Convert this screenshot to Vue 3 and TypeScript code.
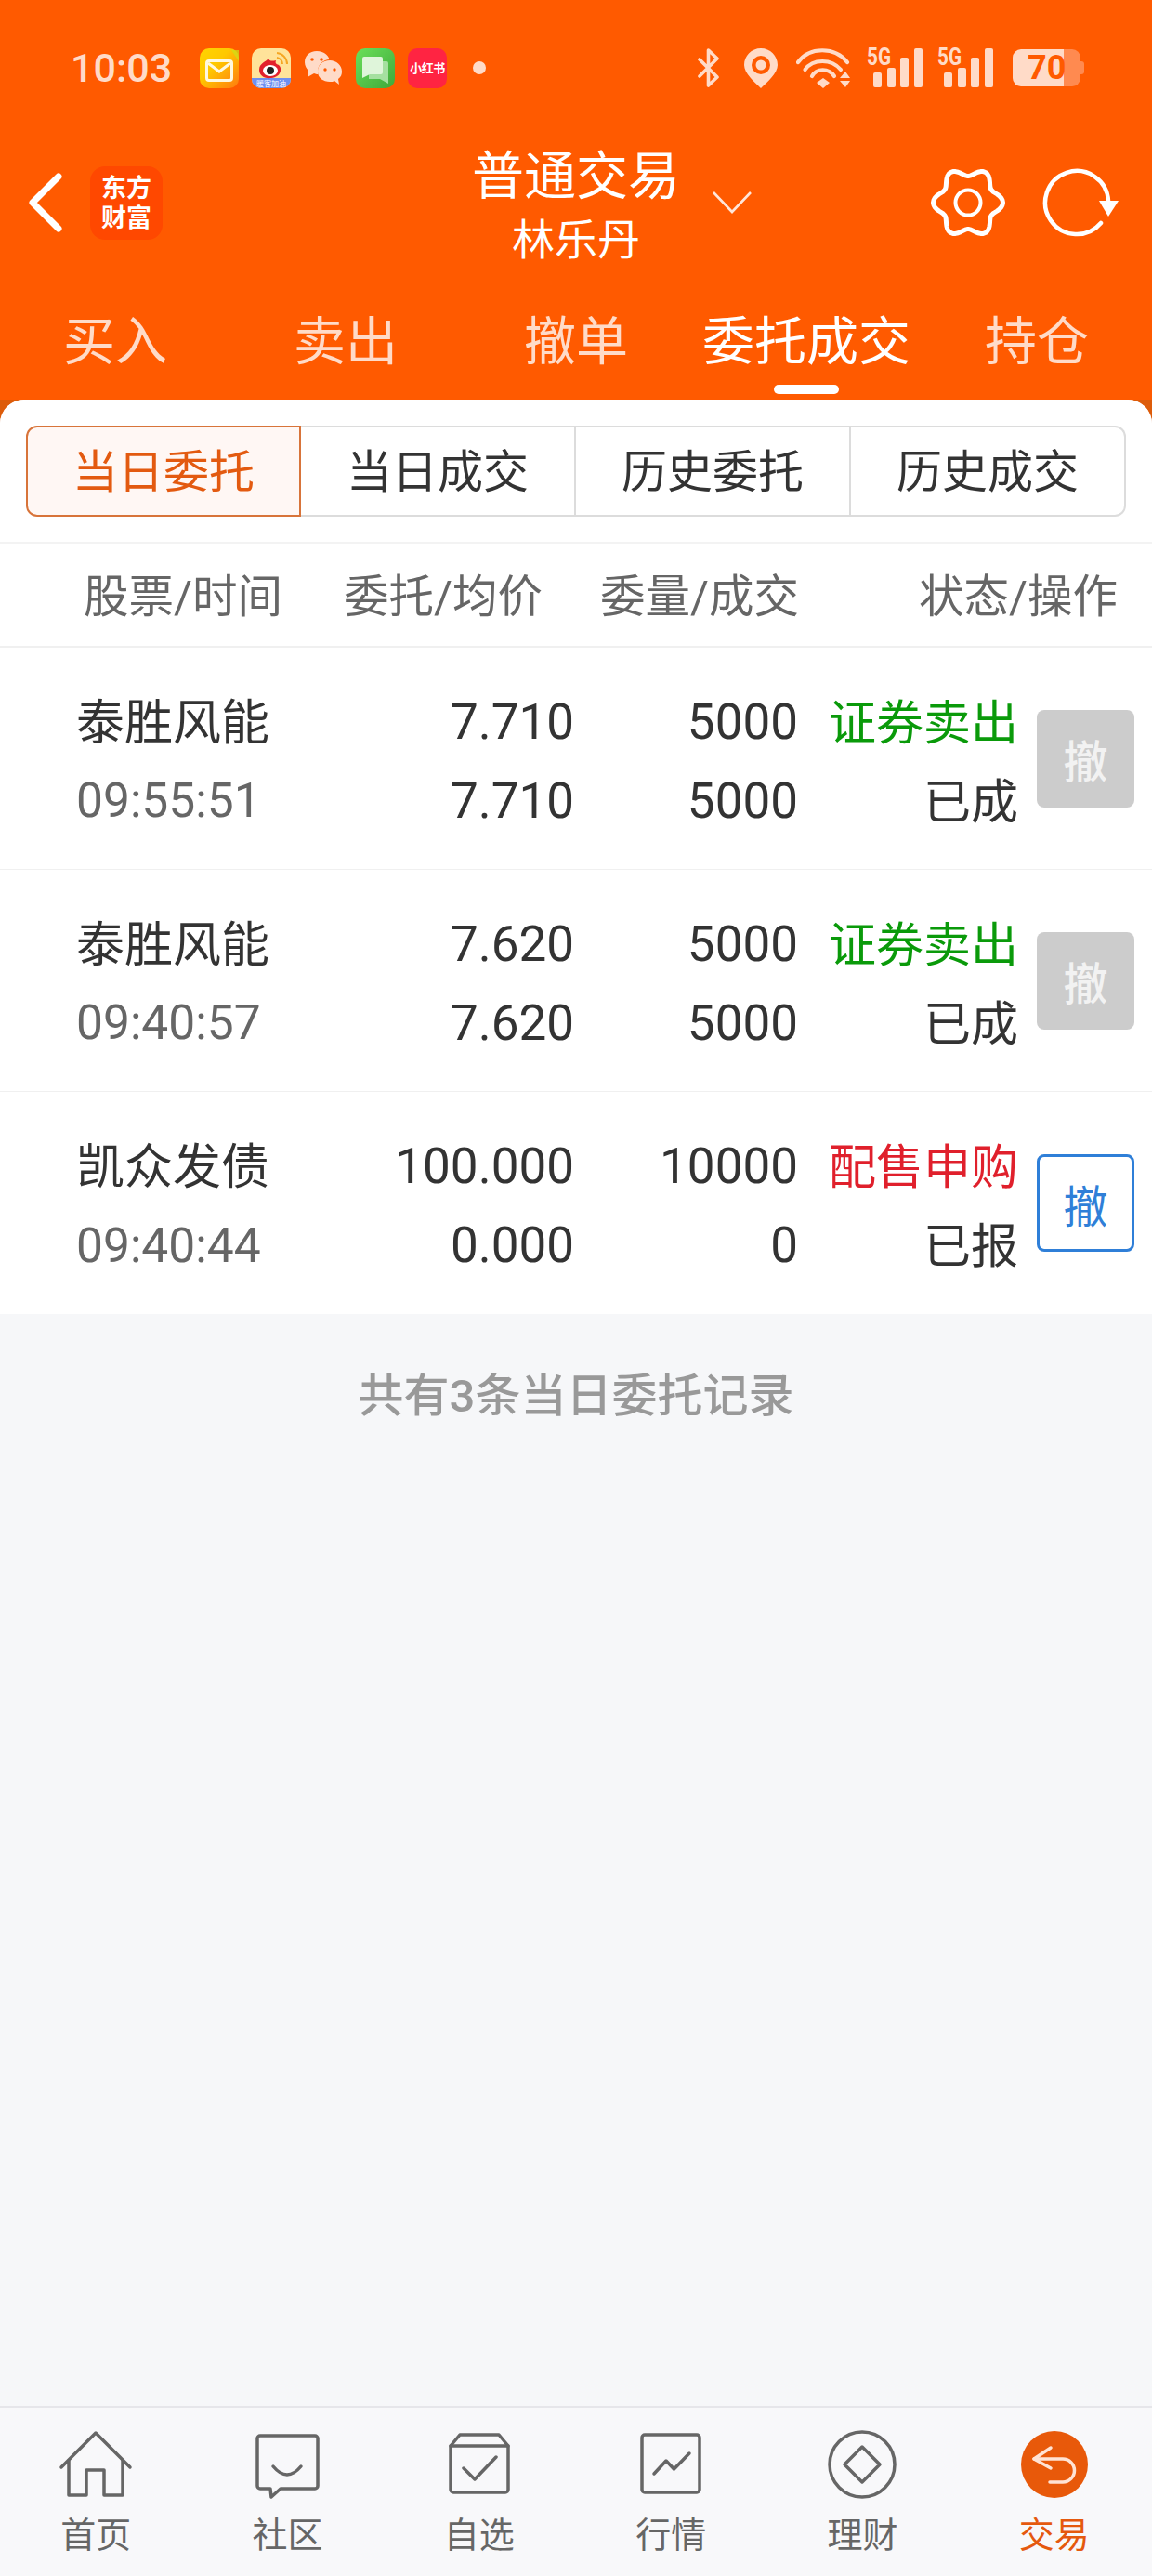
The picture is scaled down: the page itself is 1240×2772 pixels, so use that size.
<template>
  <div class="page">
    <header class="top">
      <div class="status">
        <span class="time">10:03</span>
        <div class="notes">
          <svg class="app" viewBox="0 0 42 43">
            <defs>
              <linearGradient id="mailBg" x1="0" y1="0" x2="1" y2="1">
                <stop offset="0" stop-color="#ffd400" />
                <stop offset="0.4" stop-color="#ffc800" />
                <stop offset="1" stop-color="#ff7a10" />
              </linearGradient>
            </defs>
            <rect width="42" height="43" rx="10" fill="url(#mailBg)" />
            <path d="M34 2 L42 2 L42 14 Z" fill="#cfe01a" opacity="0.7" />
            <rect x="7.5" y="13.5" width="27" height="21" rx="2.5" fill="none" stroke="#fff8e0" stroke-width="3" />
            <path d="M9 16 L21 25 L33 16" fill="none" stroke="#fff8e0" stroke-width="3" />
          </svg>
          <svg class="app" viewBox="0 0 42 43">
            <rect width="42" height="43" rx="10" fill="#ffe39a" />
            <path d="M0 32 H42 V33 A10 10 0 0 1 32 43 H10 A10 10 0 0 1 0 33 Z" fill="#6f8ff0" />
            <path d="M27 5 A12 12 0 0 1 38 17 M27 10 A7 7 0 0 1 33 17" fill="none" stroke="#f5a623" stroke-width="2" />
            <path d="M8 23 C8 16 16 14 18 11 C19 14 22 14 26 13 C25 16 26 17 29 18 C33 21 32 31 21 32 C13 33 8 29 8 23 Z" fill="#e2202c" />
            <ellipse cx="20" cy="24" rx="8" ry="6" fill="#fff" />
            <circle cx="20" cy="24" r="4" fill="#222" />
            <text x="21" y="41" class="app-tiny" text-anchor="middle">暖客加油</text>
          </svg>
          <svg class="chat" viewBox="0 0 42 38">
            <path d="M14 1 C6 1 1 6 1 13 C1 17 3 20 5 22 L4 29 L11 25 C13 26 15 26 17 26 C24 26 28 20 28 13 C28 6 22 1 14 1 Z" fill="#ffdbc8" />
            <circle cx="9" cy="10" r="1.8" fill="#ff5a00" />
            <circle cx="19" cy="10" r="1.8" fill="#ff5a00" />
            <circle cx="28" cy="23" r="13" fill="#ff5a00" />
            <path d="M28 11 C20 11 15 16 15 23 C15 30 21 34 28 34 C30 34 32 34 33 33 L38 37 L37 31 C40 29 41 26 41 23 C41 16 35 11 28 11 Z" fill="#ffdbc8" />
            <circle cx="23" cy="21" r="1.7" fill="#ff5a00" />
            <circle cx="33" cy="21" r="1.7" fill="#ff5a00" />
          </svg>
          <svg class="app" viewBox="0 0 42 43">
            <defs>
              <linearGradient id="msgBg" x1="0" y1="0" x2="1" y2="1">
                <stop offset="0" stop-color="#6ae05a" />
                <stop offset="1" stop-color="#3fa83a" />
              </linearGradient>
            </defs>
            <rect width="42" height="43" rx="10" fill="url(#msgBg)" />
            <path d="M14 14 H33 A2 2 0 0 1 35 16 V38 L26 33 H14 Z" fill="#a5e0a0" />
            <path d="M9 9 H27 A2 2 0 0 1 29 11 V26 A2 2 0 0 1 27 28 H15 L7 32 V11 A2 2 0 0 1 9 9 Z" fill="#dff5da" />
          </svg>
          <div class="xhs">小红书</div>
          <i class="dot" />
        </div>
        <div class="sys">
          <svg class="bt" viewBox="0 0 25 42">
            <path d="M3 12 L22 31 L12.5 40 V2 L22 11 L3 30" fill="none" stroke="#ffdbc8" stroke-width="3.6" stroke-linejoin="round" stroke-linecap="round" />
          </svg>
          <svg class="pin" viewBox="0 0 36 43">
            <path d="M18 0 C8 0 0 8 0 18 C0 27 11 36 18 43 C25 36 36 27 36 18 C36 8 28 0 18 0 Z" fill="#ffdbc8" />
            <circle cx="18" cy="18" r="10" fill="#ff5a00" />
            <circle cx="18" cy="18" r="5.5" fill="#ffdbc8" />
          </svg>
          <svg class="wifi" viewBox="0 0 60 43">
            <g fill="none" stroke="#ffdbc8" stroke-width="4.2" stroke-linecap="round">
              <path d="M2 15 C14 -2 42 -2 55 15" />
              <path d="M9.500 23 C18 11 38 11 48 23" />
              <path d="M17 30 C22 21 35 21 41 30" />
            </g>
            <path d="M29 32 L36 37 L29 43 L22 37 Z" fill="#ffdbc8" />
            <path d="M53 25 L58 32 H47 Z M47 35 H58 L53 42 Z" fill="#ffdbc8" />
          </svg>
          <svg v-for="n in 2" :key="n" class="signal" viewBox="0 -8 60 52">
            <text x="0" y="19" class="five-g" textLength="26" lengthAdjust="spacingAndGlyphs">5G</text>
            <rect v-for="b in bars" :key="b.x" :x="b.x" :y="b.y" width="9" :height="43 - b.y" rx="2" fill="#ffdbc8" />
          </svg>
          <div class="battery">
            <span class="battery-num">70</span>
          </div>
        </div>
      </div>

      <div class="titlebar">
        <div class="tb-left">
          <svg class="back" viewBox="0 0 40 66">
            <path d="M35 5 L7 33 L35 61" fill="none" stroke="#fff" stroke-width="7" stroke-linecap="round" stroke-linejoin="round" />
          </svg>
          <div class="logo">东方<br />财富</div>
        </div>
        <div class="tb-mid">
          <div class="title">普通交易</div>
          <div class="sub">林乐丹</div>
        </div>
        <div class="tb-right">
          <svg class="caret" viewBox="0 0 42 24">
            <path d="M1 1 L21 22 L41 1" fill="none" stroke="#ffe6da" stroke-width="2.600" />
          </svg>
          <svg class="gear" viewBox="0 0 84 84">
            <path :d="gearPath" fill="none" stroke="#fff" stroke-width="5" stroke-linejoin="round" />
            <circle cx="42" cy="42" r="13.500" fill="none" stroke="#fff" stroke-width="4" />
          </svg>
          <svg class="refresh" viewBox="0 0 88 80">
            <path d="M65 62 A34 34 0 1 1 73 38" fill="none" stroke="#fff" stroke-width="4.500" stroke-linecap="round" />
            <path d="M63 38 H84 L73 55 Z" fill="#fff" />
          </svg>
        </div>
      </div>

      <nav class="tabs">
        <div v-for="(t, i) in tabs" :key="t" class="tab" :class="{ on: i === 3 }">
          {{ t }}
          <i v-if="i === 3" class="tab-bar" />
        </div>
      </nav>
    </header>

    <main class="main">
      <div class="panel">
        <div class="white">
          <div class="seg">
            <div v-for="(s, i) in segs" :key="s" class="seg-item" :class="{ on: i === 0 }">{{ s }}</div>
          </div>
          <div class="head">
            <span>股票/时间</span>
            <span class="r">委托/均价</span>
            <span class="r">委量/成交</span>
            <span class="r">状态/操作</span>
          </div>
          <div v-for="o in orders" :key="o.time" class="row">
            <span class="name">{{ o.name }}</span>
            <span class="r">{{ o.price }}</span>
            <span class="r">{{ o.qty }}</span>
            <span class="r cjk" :class="o.dir">{{ o.kind }}</span>
            <button class="cancel" :class="{ live: o.live }">撤</button>
            <span class="clock">{{ o.time }}</span>
            <span class="r">{{ o.avg }}</span>
            <span class="r">{{ o.done }}</span>
            <span class="r cjk">{{ o.state }}</span>
          </div>
        </div>
        <div class="summary">共有3条当日委托记录</div>
      </div>
    </main>

    <footer class="nav">
      <div v-for="(n, i) in navs" :key="n.label" class="nav-item" :class="{ on: i === 5 }">
        <svg class="nav-icon" viewBox="0 0 80 80">
          <circle v-if="i === 4" cx="40" cy="40" r="35" />
          <circle v-if="i === 5" cx="40" cy="40" r="36" class="disc" />
          <path v-for="d in n.paths" :key="d" :d="d" />
        </svg>
        <span>{{ n.label }}</span>
      </div>
    </footer>
  </div>
</template>

<script setup lang="ts">
const tabs = ['买入', '卖出', '撤单', '委托成交', '持仓']
const segs = ['当日委托', '当日成交', '历史委托', '历史成交']

const bars = [
  { x: 7, y: 27 },
  { x: 22, y: 22 },
  { x: 36, y: 11 },
  { x: 51, y: 1 },
]

const orders = [
  { name: '泰胜风能', time: '09:55:51', price: '7.710', avg: '7.710', qty: '5000', done: '5000', kind: '证券卖出', state: '已成', dir: 'sell', live: false },
  { name: '泰胜风能', time: '09:40:57', price: '7.620', avg: '7.620', qty: '5000', done: '5000', kind: '证券卖出', state: '已成', dir: 'sell', live: false },
  { name: '凯众发债', time: '09:40:44', price: '100.000', avg: '0.000', qty: '10000', done: '0', kind: '配售申购', state: '已报', dir: 'buy', live: true },
]

const navs = [
  { label: '首页', paths: ['M3 43 L40 6 L77 43', 'M11 36 V73 H30 V46 H49 V73 H69 V36'] },
  { label: '社区', paths: ['M11 9 H70 a3 3 0 0 1 3 3 V63 a3 3 0 0 1 -3 3 H33 L23 75 L22 66 H11 a3 3 0 0 1 -3 -3 V12 a3 3 0 0 1 3 -3 Z', 'M25 42 Q40 60 55 42'] },
  { label: '自选', paths: ['M9 20 L19 8 H61 L71 20 V67 a3 3 0 0 1 -3 3 H12 a3 3 0 0 1 -3 -3 Z', 'M9 20 H71', 'M23 44 L35 56 L58 32'] },
  { label: '行情', paths: ['M12 8 H68 a3 3 0 0 1 3 3 V67 a3 3 0 0 1 -3 3 H12 a3 3 0 0 1 -3 -3 V11 a3 3 0 0 1 3 -3 Z', 'M22 50 L35 36 L43.500 45 L60 28'] },
  { label: '理财', paths: ['M40 21 L59 40 L40 59 L21 40 Z'] },
  { label: '交易', paths: ['M36 22 L18 34 L36 44', 'M18 34 H49 A12.500 12.500 0 0 1 49 59 H35'] },
]

// wavy outline, six lobes
const gearPath = (() => {
  const pts: string[] = []
  for (let a = 0; a < 360; a += 4) {
    const t = (a * Math.PI) / 180
    const r = 33 + 4.5 * Math.cos(6 * t)
    pts.push((42 + r * Math.cos(t)).toFixed(1) + ' ' + (42 + r * Math.sin(t)).toFixed(1))
  }
  return 'M' + pts.join(' L') + ' Z'
})()
</script>

<style scoped>
.page { height: 2772px; display: flex; flex-direction: column; font-family: Roboto, "Noto Sans CJK SC", sans-serif; color: #333; background: #f6f7f9; }
.r { text-align: right; }

/* top orange area */
.top { background: #ff5a00; }
.status { height: 146px; display: flex; align-items: center; padding: 0 77px 0 76px; color: #ffdbc8; }
.time { font-size: 43px; font-weight: 500; width: 139px; flex-shrink: 0; }
.notes { display: flex; align-items: center; gap: 14px; }
.app { width: 42px; height: 43px; display: block; }
.app-tiny { font-size: 8px; fill: #fff; font-family: "Noto Sans CJK SC", sans-serif; }
.chat { width: 42px; height: 38px; display: block; }
.xhs { width: 42px; height: 43px; border-radius: 10px; background: #ff2442; color: #fff; font-size: 13px; font-weight: 700; line-height: 43px; text-align: center; white-space: nowrap; letter-spacing: -0.5px; }
.dot { width: 14px; height: 14px; border-radius: 50%; background: #ffdbc8; margin-left: 14px; }
.sys { margin-left: auto; display: flex; align-items: center; }
.bt { width: 25px; height: 42px; display: block; }
.pin { width: 36px; height: 43px; display: block; margin-left: 26px; }
.wifi { width: 60px; height: 43px; display: block; margin-left: 20px; }
.signal { width: 60px; height: 52px; display: block; margin-left: 16px; margin-bottom: 8px; }
.five-g { font-size: 26px; font-weight: 700; fill: #ffdbc8; font-family: Roboto, sans-serif; }
.battery { position: relative; width: 73px; height: 40px; margin-left: 21px; border-radius: 9px; background: linear-gradient(90deg, #ffdbc8 0 55px, #ff8a50 55px); }
.battery::after { content: ""; position: absolute; left: 73px; top: 13px; width: 4px; height: 14px; border-radius: 0 3px 3px 0; background: #ff8a50; }
.battery-num { position: absolute; left: 16px; top: 0; line-height: 40px; font-size: 36px; font-weight: 700; color: #ff5a00; }

.titlebar { height: 154px; display: grid; grid-template-columns: 1fr 224px 1fr; color: #fff; }
.tb-left, .tb-right { display: flex; align-items: center; padding-bottom: 10px; }
.tb-left { padding-left: 28px; }
.back { width: 40px; height: 66px; display: block; }
.logo { width: 78px; height: 79px; margin-left: 29px; border-radius: 16px; background: #ff4800; color: #fff; font-size: 27px; font-weight: 700; line-height: 32px; text-align: center; padding-top: 8px; box-sizing: border-box; }
.tb-mid { padding-top: 14px; text-align: center; white-space: nowrap; }
.title { font-size: 56px; line-height: 60px; }
.sub { font-size: 46px; line-height: 76px; }
.tb-right { padding-left: 35px; padding-right: 32px; }
.caret { width: 42px; height: 24px; display: block; }
.gear { width: 84px; height: 84px; display: block; margin-left: auto; }
.refresh { width: 88px; height: 80px; display: block; margin-left: 36px; }

.tabs { height: 130px; display: grid; grid-template-columns: repeat(5, 1fr); }
.tab { position: relative; text-align: center; font-size: 56px; line-height: 136px; color: #ffdbc8; white-space: nowrap; }
.tab.on { color: #fff; }
.tab-bar { position: absolute; left: 89px; bottom: 12px; width: 70px; height: 10px; border-radius: 5px; background: #fff; }

/* content */
.main { flex: 1; display: flex; background: #dd5c0a; min-height: 0; }
.panel { flex: 1; border-radius: 26px 26px 0 0; background: #f6f7f9; overflow: hidden; }
.white { background: #fff; }
.seg { display: grid; grid-template-columns: repeat(4, 296px); padding: 28px 28px 27px; }
.seg-item { height: 98px; box-sizing: border-box; border: 2px solid #dcdcdc; border-left: none; text-align: center; font-size: 49px; line-height: 97px; color: #333; }
.seg-item.on { border: 2px solid #d8743a; background: #fff7f4; color: #e35a10; border-radius: 12px 0 0 12px; }
.seg-item:last-child { border-radius: 0 12px 12px 0; }
.head { height: 105px; display: grid; grid-template-columns: 280px 213px 277px 343px; align-items: center; padding: 5px 0 0 90px; border-top: 2px solid #f3f3f3; border-bottom: 2px solid #f0f0f0; font-size: 48.5px; line-height: 70px; color: #666; white-space: nowrap; }
.row { box-sizing: border-box; height: 239px; display: grid; grid-template-columns: 337px 199px 241px 237px 125px; grid-template-rows: 85px 85px; align-content: center; align-items: center; padding-top: 6px; padding-left: 82px; font-size: 53px; border-bottom: 1px solid #f0f0f0; white-space: nowrap; }
.row:last-child { border-bottom: none; }
.name { font-size: 52px; margin-bottom: 7px; }
.cjk { font-size: 51px; margin-bottom: 6px; }
.clock { color: #666; font-size: 51.5px; }
.sell { color: #0a9a0a; }
.buy { color: #e0202c; }
.cancel { grid-column: 5; grid-row: 1 / 3; justify-self: end; width: 105px; height: 105px; margin-bottom: 6px; padding: 0; border: none; border-radius: 8px; background: #ccc; color: #f2f2f2; font-family: inherit; font-size: 48px; font-weight: 500; }
.cancel.live { background: #fff; border: 3px solid #2f7fd8; color: #2f7fd8; font-weight: 400; }
.summary { text-align: center; font-size: 49px; font-weight: 500; line-height: 178px; color: #999; }

/* bottom nav */
.nav { height: 183px; box-sizing: border-box; display: grid; grid-template-columns: repeat(6, 1fr); padding: 21px 2px 0 0; border-top: 2px solid #e6e6ea; background: #f8f8fa; }
.nav-item { display: flex; flex-direction: column; align-items: center; font-size: 38px; line-height: 72px; color: #666; }
.nav-item.on { color: #e5590e; }
.nav-icon { width: 80px; height: 80px; display: block; fill: none; stroke: #666; stroke-width: 3.5; stroke-linejoin: round; stroke-linecap: round; }
.nav-item.on .nav-icon { stroke: #ffe3d4; }
.nav-icon .disc { fill: #e8590a; stroke: none; }
</style>
